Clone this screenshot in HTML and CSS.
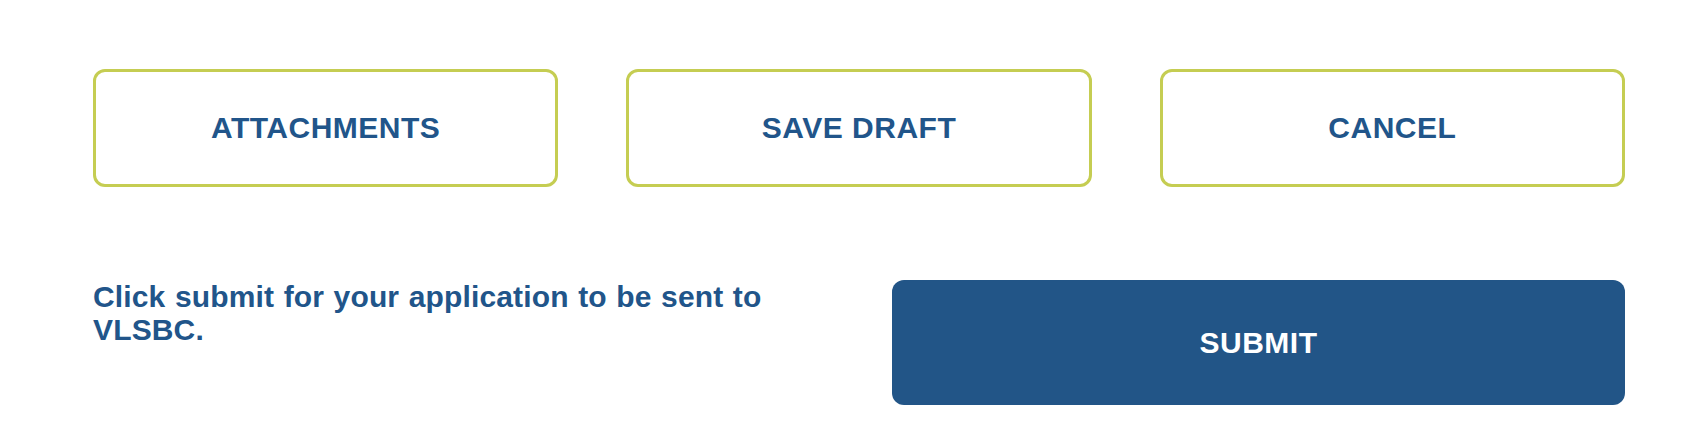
FILE: index.html
```html
<!DOCTYPE html>
<html lang="en">
<head>
<meta charset="utf-8">
<title>Application actions</title>
<link rel="stylesheet" href="styles.css">
</head>
<body>
<main class="actions">
  <div class="actions-row">
    <button class="btn btn-outline" type="button">ATTACHMENTS</button>
    <button class="btn btn-outline" type="button">SAVE DRAFT</button>
    <button class="btn btn-outline" type="button">CANCEL</button>
  </div>
  <div class="submit-row">
    <p class="submit-note">Click submit for your application to be sent to VLSBC.</p>
    <button class="btn btn-primary" type="submit">SUBMIT</button>
  </div>
</main>
</body>
</html>
```
FILE: styles.css
```css
html, body {
  margin: 0;
  padding: 0;
  background: #ffffff;
}

body {
  font-family: "Liberation Sans", Arial, Helvetica, sans-serif;
  color: #21558a;
}

.actions {
  width: 1532px;
  padding: 69px 0 0 93px;
  display: flex;
  flex-direction: column;
  gap: 93px;
}

.actions-row {
  display: grid;
  grid-template-columns: repeat(3, 1fr);
  column-gap: 68px;
}

.btn {
  font-family: inherit;
  font-weight: 700;
  font-size: 30px;
  line-height: 1;
  letter-spacing: 0.5px;
  margin: 0;
  cursor: pointer;
  border-radius: 12px;
  box-sizing: border-box;
}

.btn-outline {
  height: 118px;
  background: #ffffff;
  border: 3px solid #c5cd52;
  color: #21558a;
}

.submit-row {
  display: grid;
  grid-template-columns: 1fr 733px;
  column-gap: 80px;
  align-items: start;
}

.submit-note {
  margin: 0;
  font-size: 30px;
  font-weight: 700;
  line-height: 33px;
  word-spacing: 1px;
  letter-spacing: 0.15px;
  color: #21558a;
}

.btn-primary {
  height: 125px;
  background: #225587;
  border: none;
  color: #ffffff;
}
```
